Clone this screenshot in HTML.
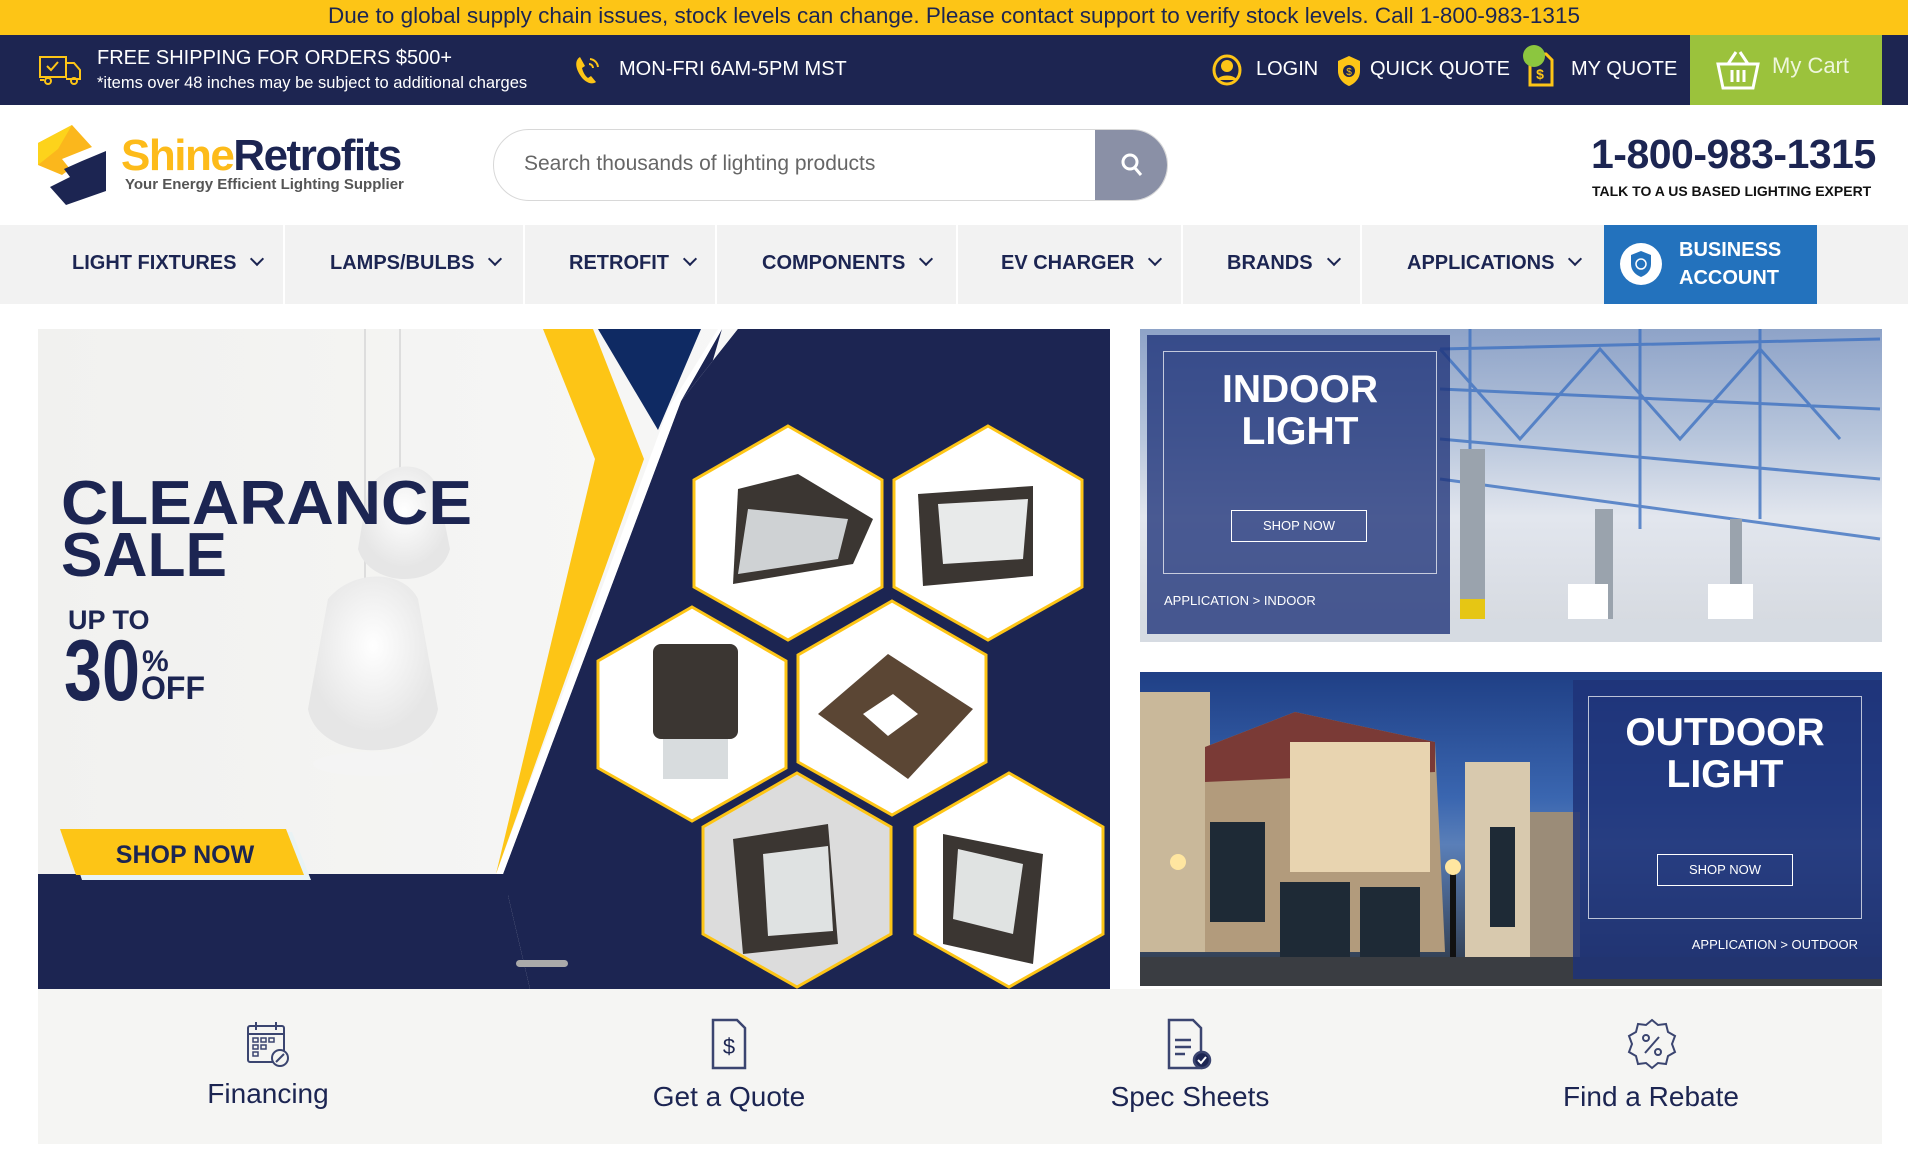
<!DOCTYPE html>
<html><head><meta charset="utf-8"><style>
*{margin:0;padding:0;box-sizing:border-box}
body{width:1908px;height:1151px;position:relative;background:#fff;font-family:"Liberation Sans",sans-serif;color:#1c2552;overflow:hidden}
.a{position:absolute;white-space:nowrap}
.nav{color:#fff}
.mi{position:absolute;top:252px;font-weight:bold;font-size:20px;color:#1c2552}
.mi:after{content:"";display:inline-block;width:8px;height:8px;border-right:2px solid #1c2552;border-bottom:2px solid #1c2552;transform:rotate(45deg);margin-left:16px;position:relative;top:-5px}
.sep{position:absolute;top:225px;width:2px;height:79px;background:#fff}
.bt{position:absolute;font-size:28px;color:#1c2552;text-align:center;width:300px}
</style></head><body>
<div class="a" style="left:0;top:0;width:1908px;height:35px;background:#fdc516"></div>
<div class="a" style="left:0;top:3px;width:1908px;text-align:center;font-size:22.5px;color:#1c2552">Due to global supply chain issues, stock levels can change. Please contact support to verify stock levels. Call 1-800-983-1315</div>
<div class="a" style="left:0;top:35px;width:1908px;height:70px;background:#1d2551"></div>
<svg class="a" style="left:38px;top:55px" width="46" height="32" viewBox="0 0 46 32" fill="none" stroke="#fdc516" stroke-width="2"><rect x="2" y="2" width="26" height="20"/><path d="M28 8h8l6 7v9H28M2 25h4"/><circle cx="10" cy="26" r="3"/><circle cx="36" cy="26" r="3"/><path d="M9 11l4 4 7-8"/></svg>
<div class="a nav" style="left:97px;top:47px;font-size:20px">FREE SHIPPING FOR ORDERS $500+</div>
<div class="a nav" style="left:97px;top:74px;font-size:16.5px">*items over 48 inches may be subject to additional charges</div>
<svg class="a" style="left:574px;top:55px" width="28" height="30" viewBox="0 0 28 30"><path d="M6 2c-5 3-5 10 0 18s12 10 16 7l-5-6-3 2c-3-2-5-6-6-10l3-2z" fill="#fdc516"/><path d="M16 4a9 9 0 0 1 8 8M15 9a4 4 0 0 1 4 4" stroke="#fdc516" stroke-width="2" fill="none"/></svg>
<div class="a nav" style="left:619px;top:58px;font-size:20px">MON-FRI 6AM-5PM MST</div>
<svg class="a" style="left:1212px;top:54px" width="30" height="32" viewBox="0 0 30 32"><ellipse cx="15" cy="16" rx="13" ry="14" fill="none" stroke="#fdc516" stroke-width="3"/><circle cx="15" cy="12" r="6" fill="#fdc516"/><path d="M5 26c3-6 17-6 20 0" fill="#fdc516"/></svg>
<div class="a nav" style="left:1256px;top:58px;font-size:20px">LOGIN</div>
<svg class="a" style="left:1336px;top:55px" width="26" height="32" viewBox="0 0 26 32"><path d="M13 1l11 5v10c0 8-6 13-11 15C8 29 2 24 2 16V6z" fill="#fdc516"/><circle cx="13" cy="16" r="6" fill="#1d2551"/><text x="13" y="20" font-size="10" fill="#fdc516" text-anchor="middle" font-family="Liberation Sans">$</text></svg>
<div class="a nav" style="left:1370px;top:58px;font-size:20px">QUICK QUOTE</div>
<svg class="a" style="left:1520px;top:44px" width="40" height="44" viewBox="0 0 40 44"><path d="M10 10h16l6 6v25H10z" fill="none" stroke="#fdc516" stroke-width="3"/><text x="20" y="35" font-size="14" fill="#fdc516" text-anchor="middle" font-family="Liberation Sans" font-weight="bold">$</text><circle cx="14" cy="12" r="11" fill="#8cc63f"/></svg>
<div class="a nav" style="left:1571px;top:58px;font-size:20px">MY QUOTE</div>
<div class="a" style="left:1690px;top:35px;width:192px;height:70px;background:#9bc23c"></div>
<svg class="a" style="left:1716px;top:50px" width="44" height="40" viewBox="0 0 44 40" fill="none" stroke="#fff" stroke-width="3"><path d="M2 14h40l-5 24H7z"/><path d="M12 14l8-12M32 14l-8-12M16 20v12M22 20v12M28 20v12"/></svg>
<div class="a" style="left:1772px;top:53px;font-size:22px;color:#eef6dc">My Cart</div>
<svg class="a" style="left:38px;top:125px" width="70" height="80" viewBox="0 0 70 80"><path d="M0 18L34 0l20 22-30 12 8 10-8 6-24-10z" fill="#fbb71c"/><path d="M0 18L34 0 20 24 0 40z" fill="#fdd31b"/><path d="M68 26v40L28 80 12 62l20-10-6-8 18-8z" fill="#1c2552"/></svg>
<div class="a" style="left:121px;top:131px;font-size:44px;font-weight:bold;letter-spacing:-1.5px"><span style="color:#fdbb1a">Shine</span><span style="color:#1c2552">Retrofits</span></div>
<div class="a" style="left:125px;top:176px;font-size:15px;font-weight:bold;color:#555">Your Energy Efficient Lighting Supplier</div>
<div class="a" style="left:493px;top:129px;width:675px;height:72px;border:1px solid #d8d8d8;border-radius:36px;overflow:hidden">
<div class="a" style="left:601px;top:0;width:74px;height:72px;background:#8a90a6"></div></div>
<svg class="a" style="left:1120px;top:152px" width="24" height="26" viewBox="0 0 24 26" fill="none" stroke="#fff" stroke-width="3"><circle cx="10" cy="10" r="7"/><path d="M15 16l6 7"/></svg>
<div class="a" style="left:524px;top:152px;font-size:21px;color:#666">Search thousands of lighting products</div>
<div class="a" style="left:1591px;top:131px;font-size:41px;font-weight:bold;letter-spacing:-0.5px">1-800-983-1315</div>
<div class="a" style="left:1592px;top:183px;font-size:14px;font-weight:bold;color:#111">TALK TO A US BASED LIGHTING EXPERT</div>
<div class="a" style="left:0;top:225px;width:1908px;height:79px;background:#f2f2f2"></div>
<div class="sep" style="left:283px"></div><div class="sep" style="left:523px"></div><div class="sep" style="left:715px"></div><div class="sep" style="left:956px"></div><div class="sep" style="left:1181px"></div><div class="sep" style="left:1360px"></div>
<div class="mi" style="left:72px">LIGHT FIXTURES</div>
<div class="mi" style="left:330px">LAMPS/BULBS</div>
<div class="mi" style="left:569px">RETROFIT</div>
<div class="mi" style="left:762px">COMPONENTS</div>
<div class="mi" style="left:1001px">EV CHARGER</div>
<div class="mi" style="left:1227px">BRANDS</div>
<div class="mi" style="left:1407px">APPLICATIONS</div>
<div class="a" style="left:1604px;top:225px;width:213px;height:79px;background:#2372bd"></div>
<svg class="a" style="left:1619px;top:242px" width="44" height="44" viewBox="0 0 44 44"><circle cx="22" cy="22" r="21" fill="#fff"/><path d="M22 9l10 4v9c0 7-5 11-10 13-5-2-10-6-10-13v-9z" fill="#2372bd"/><circle cx="22" cy="22" r="5" fill="none" stroke="#fff" stroke-width="1.5"/></svg>
<div class="a" style="left:1679px;top:236px;font-size:20px;font-weight:bold;color:#fff;line-height:28px">BUSINESS<br>ACCOUNT</div>
<svg class="a" style="left:38px;top:329px" width="1072" height="660" viewBox="0 0 1072 660">
<defs><linearGradient id="lg" x1="0" x2="1"><stop offset="0" stop-color="#f1f1ef"/><stop offset="1" stop-color="#fafafa"/></linearGradient>
<radialGradient id="lamp" cx=".5" cy=".4"><stop offset="0" stop-color="#fff"/><stop offset="1" stop-color="#e6e6e6"/></radialGradient></defs>
<rect width="1072" height="660" fill="url(#lg)"/>
<path d="M362 0v170M327 0v270" stroke="#ddd" stroke-width="2"/>
<path d="M330 160c20-30 60-30 70 0l12 60c-10 40-80 40-92 0z" fill="url(#lamp)"/>
<path d="M290 270c25-30 75-30 90 0l20 110c-10 55-120 55-130 0z" fill="url(#lamp)"/>
<ellipse cx="335" cy="435" rx="60" ry="12" fill="#f4f4f4"/>
<path d="M684 0L643 72 465 545 492 660H0V545h465L643 72 700 0h372v660H492z" fill="#1c2552"/>
<path d="M700 0h372v660H492l-27-115L643 72z" fill="#1c2552"/>
<path d="M465 545L643 72 684 0h-4L630 80 458 545z" fill="#fff"/>
<path d="M560 0h103l-43 101z" fill="#0f2a63"/>
<path d="M505 0h50l51 130-148 415 99-415z" fill="#fdc516"/>
<rect x="0" y="545" width="470" height="115" fill="#1c2552"/>
<g stroke="#fdc516" stroke-width="3" fill="#fff">
<path d="M750 97l94 54v107l-94 53-94-53V151z"/>
<path d="M950 97l94 54v107l-94 53-94-53V151z"/>
<path d="M654 278l94 54v107l-94 53-94-53V332z"/>
<path d="M854 272l94 54v107l-94 53-94-53V326z"/>
<path d="M759 444l94 54v107l-94 53-94-53V498z" fill="#dcdcdc"/>
<path d="M971 444l94 54v107l-94 53-94-53V498z"/>
</g>
<g fill="#3b3632">
<path d="M700 160l60-15 75 45-20 45-120 20z"/><path d="M710 180l100 10-10 40-100 15z" fill="#cfd2d4"/>
<path d="M880 165l115-8 0 90-110 10z"/><path d="M900 175l90-5-5 60-80 5z" fill="#e8eaea"/>
<rect x="615" y="315" width="85" height="95" rx="8"/><rect x="625" y="410" width="65" height="40" fill="#d8dcde"/>
<path d="M780 385l70-60 85 55-65 70z" fill="#5b4634"/><path d="M825 385l30-20 25 20-30 22z" fill="#fff"/>
<path d="M695 510l95-15 10 120-95 10z"/><path d="M725 525l65-8 5 85-65 5z" fill="#dfe2e2"/>
<path d="M905 505l100 20-10 110-90-20z"/><path d="M920 520l65 15-10 70-60-15z" fill="#e0e3e2"/>
</g>
<rect x="478" y="631" width="52" height="7" rx="3.5" fill="#aaa"/>
<text x="23" y="195" font-size="62" font-weight="bold" fill="#1c2552" font-family="Liberation Sans" textLength="411" lengthAdjust="spacingAndGlyphs">CLEARANCE</text>
<text x="23" y="247" font-size="62" font-weight="bold" fill="#1c2552" font-family="Liberation Sans" textLength="166" lengthAdjust="spacingAndGlyphs">SALE</text>
<text x="30" y="300" font-size="27" font-weight="bold" fill="#1c2552" font-family="Liberation Sans">UP TO</text>
<text x="26" y="371" font-size="86" font-weight="bold" fill="#1c2552" font-family="Liberation Sans" textLength="76" lengthAdjust="spacingAndGlyphs">30</text>
<text x="104" y="342" font-size="30" font-weight="bold" fill="#1c2552" font-family="Liberation Sans">%</text>
<text x="103" y="370" font-size="32" font-weight="bold" fill="#1c2552" font-family="Liberation Sans">OFF</text>
<path d="M28 503h226l19 48H44z" fill="#e9f3f5"/><path d="M22 500h226l18 46H38z" fill="#fdc516"/>
<text x="147" y="534" font-size="25" font-weight="bold" fill="#1c2552" font-family="Liberation Sans" text-anchor="middle">SHOP NOW</text>
</svg>
<div class="a" style="left:1140px;top:329px;width:742px;height:313px;overflow:hidden;background:linear-gradient(180deg,#8ea3c8 0%,#b8c6dc 35%,#e2e6ee 60%,#d4d8de 100%)">
<svg class="a" style="left:0;top:0" width="742" height="313" viewBox="0 0 742 313"><g stroke="#3f72c0" stroke-width="3" fill="none" opacity=".8"><path d="M300 20l440 -10M300 60l440 20M300 110l440 40M300 150l440 60M330 0v220M500 0v200M620 0v190M300 20l80 90 80-90 80 90 80-90 80 90"/></g><rect x="320" y="120" width="25" height="190" fill="#9aa3ad"/><rect x="455" y="180" width="18" height="120" fill="#9aa3ad"/><rect x="590" y="190" width="12" height="90" fill="#9aa3ad"/><rect x="428" y="255" width="40" height="50" fill="#fff"/><rect x="568" y="255" width="45" height="45" fill="#fff"/><rect x="320" y="270" width="25" height="35" fill="#e6c614"/><rect x="0" y="290" width="742" height="23" fill="#d6dbe2"/></svg>
<div class="a" style="left:7px;top:6px;width:303px;height:299px;background:rgba(30,50,120,.78)"></div>
<div class="a" style="left:23px;top:22px;width:274px;height:223px;border:1px solid rgba(255,255,255,.7)"></div>
<div class="a" style="left:23px;top:40px;width:274px;text-align:center;font-size:39px;font-weight:bold;color:#fff;line-height:42px">INDOOR<br>LIGHT</div>
<div class="a" style="left:91px;top:181px;width:136px;height:32px;border:1px solid #fff;color:#fff;font-size:13px;text-align:center;line-height:30px">SHOP NOW</div>
<div class="a" style="left:24px;top:264px;font-size:13px;color:#fff">APPLICATION &gt; INDOOR</div>
</div>
<div class="a" style="left:1140px;top:672px;width:742px;height:314px;overflow:hidden;background:linear-gradient(180deg,#1f3f85 0%,#3a66b0 40%,#5a7fb8 55%,#2a3340 100%)">
<svg class="a" style="left:0;top:0" width="742" height="314" viewBox="0 0 742 314"><path d="M0 20h70v260H0z" fill="#c9b89a"/><path d="M65 75l90-35 140 30 10 210H65z" fill="#b29b7c"/><path d="M65 75l90-35 140 30v30L65 110z" fill="#7a3a36"/><path d="M150 70h140v130H150z" fill="#e8d4b0"/><path d="M325 90h65v200h-65z" fill="#d8c9ae"/><path d="M390 140h50v150h-50z" fill="#9b8c78"/><g fill="#1e2a36"><rect x="70" y="150" width="55" height="100"/><rect x="140" y="210" width="70" height="80"/><rect x="220" y="215" width="60" height="75"/><rect x="350" y="155" width="25" height="100"/></g><rect x="310" y="200" width="6" height="110" fill="#111"/><circle cx="313" cy="195" r="8" fill="#ffe6a0"/><circle cx="38" cy="190" r="8" fill="#ffe6a0"/><rect x="0" y="285" width="742" height="29" fill="#3a3d42"/></svg>
<div class="a" style="left:433px;top:8px;width:309px;height:299px;background:rgba(30,50,120,.85)"></div>
<div class="a" style="left:448px;top:24px;width:274px;height:223px;border:1px solid rgba(255,255,255,.7)"></div>
<div class="a" style="left:448px;top:40px;width:274px;text-align:center;font-size:39px;font-weight:bold;color:#fff;line-height:42px">OUTDOOR<br>LIGHT</div>
<div class="a" style="left:517px;top:182px;width:136px;height:32px;border:1px solid #fff;color:#fff;font-size:13px;text-align:center;line-height:30px">SHOP NOW</div>
<div class="a" style="left:440px;top:265px;width:278px;text-align:right;font-size:13px;color:#fff">APPLICATION &gt; OUTDOOR</div>
</div>
<div class="a" style="left:38px;top:989px;width:1844px;height:155px;background:#f5f5f3"></div>
<svg class="a" style="left:246px;top:1020px" width="44" height="48" viewBox="0 0 44 48" fill="none" stroke="#3b4570" stroke-width="2"><rect x="2" y="6" width="36" height="36" rx="2"/><path d="M2 14h36M10 2v8M30 2v8"/><g stroke-width="1.5"><rect x="7" y="18" width="5" height="4"/><rect x="15" y="18" width="5" height="4"/><rect x="23" y="18" width="5" height="4"/><rect x="7" y="25" width="5" height="4"/><rect x="15" y="25" width="5" height="4"/><rect x="7" y="32" width="5" height="4"/></g><circle cx="34" cy="38" r="8" fill="#f5f5f3"/><path d="M30 42l8-8"/></svg>
<svg class="a" style="left:710px;top:1018px" width="40" height="52" viewBox="0 0 40 52" fill="none" stroke="#3b4570" stroke-width="2.5"><path d="M3 2h24l8 8v40H3z"/><text x="19" y="36" font-size="22" fill="#1c2552" stroke="none" text-anchor="middle" font-family="Liberation Sans">$</text></svg>
<svg class="a" style="left:1166px;top:1018px" width="48" height="54" viewBox="0 0 48 54" fill="none" stroke="#3b4570" stroke-width="2.5"><path d="M3 2h24l8 8v40H3z"/><path d="M9 22h16M9 29h16M9 36h10"/><circle cx="36" cy="42" r="8" fill="#1c2552"/><path d="M32 42l3 3 5-6" stroke="#fff" stroke-width="2"/></svg>
<svg class="a" style="left:1626px;top:1018px" width="52" height="54" viewBox="0 0 52 54" fill="none" stroke="#3b4570" stroke-width="2"><path d="M26 2l6 5 8-1 2 8 7 4-3 8 3 8-7 4-2 8-8-1-6 5-6-5-8 1-2-8-7-4 3-8-3-8 7-4 2-8 8 1z"/><path d="M19 35l14-16"/><circle cx="20" cy="20" r="3"/><circle cx="32" cy="34" r="3"/></svg>
<div class="bt" style="left:118px;top:1078px">Financing</div>
<div class="bt" style="left:579px;top:1081px">Get a Quote</div>
<div class="bt" style="left:1040px;top:1081px">Spec Sheets</div>
<div class="bt" style="left:1501px;top:1081px">Find a Rebate</div>
</body></html>
